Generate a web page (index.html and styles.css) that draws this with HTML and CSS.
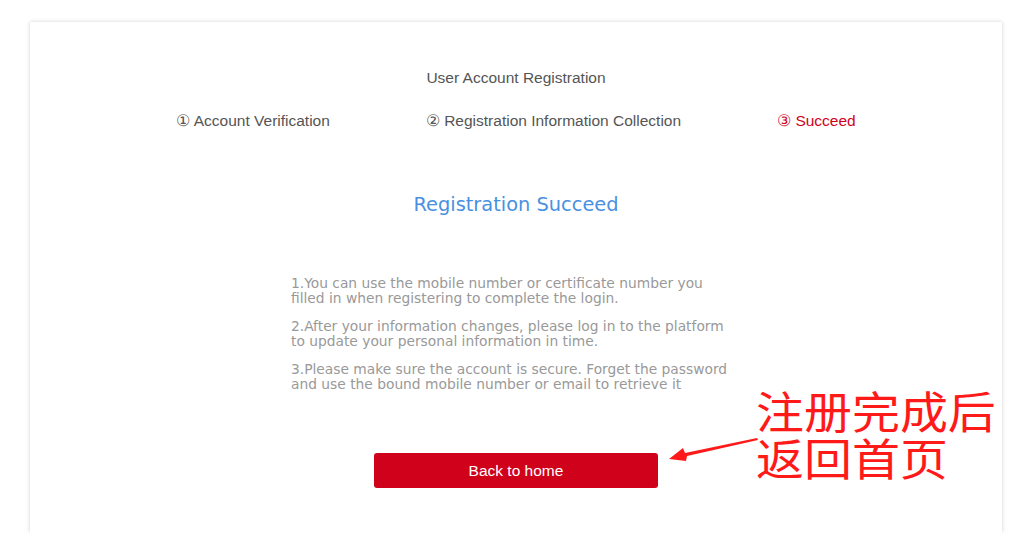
FILE: index.html
```html
<!DOCTYPE html>
<html lang="en">
<head>
    <meta charset="UTF-8">
    <meta name="viewport" content="width=device-width, initial-scale=1.0">
    <title>User Account Registration</title>
    <link rel="stylesheet" href="styles.css">
</head>
<body>

<div class="card">
    <div class="reg-title">User Account Registration</div>

    <div class="steps">
        <div class="step">① Account Verification</div>
        <div class="step">② Registration Information Collection</div>
        <div class="step active">③ Succeed</div>
    </div>

    <h2 class="result">Registration Succeed</h2>

    <div class="tips">
        <p>1.You can use the mobile number or certificate number you filled in when registering to complete the login.</p>
        <p>2.After your information changes, please log in to the platform to update your personal information in time.</p>
        <p>3.Please make sure the account is secure. Forget the password and use the bound mobile number or email to retrieve it</p>
    </div>

    <div class="btn-row">
        <button class="btn-home">Back to home</button>
    </div>

    <!-- annotation -->
    <svg class="note-arrow" width="100" height="30" viewBox="0 0 100 30">
        <polygon points="90,2 91,4 20,20 19,25 2,23 16,12 18,17" fill="#ff1a1a"/>
    </svg>
    <div class="note">注册完成后<br>返回首页</div>
</div>

</body>
</html>
```

FILE: styles.css
```css
body{
    margin: 0;
    background: #fff;
    font-family: "Liberation Sans", Arial, sans-serif;
}
.card{
    position: relative;
    box-sizing: border-box;
    margin: 22px 29px 0 30px;
    height: 511px;
    background: #fff;
    box-shadow: 0 0 4px rgba(0,0,0,0.18);
    padding-top: 47px;
}
.reg-title{
    text-align: center;
    font-size: 15.5px;
    color: #555;
    line-height: 18px;
}
.steps{
    display: flex;
    justify-content: center;
    gap: 96px;
    margin-top: 25px;
    font-size: 15.5px;
    line-height: 18px;
    color: #555;
}
.step.active{
    color: #d0021b;
}
.result{
    margin: 63px 0 0;
    text-align: center;
    font-family: "DejaVu Sans", Verdana, sans-serif;
    font-weight: normal;
    font-size: 19.4px;
    line-height: 24px;
    color: #4a90e2;
}
.tips{
    box-sizing: border-box;
    width: 450px;
    padding-right: 6px;
    margin: 59px auto 0;
    font-family: "DejaVu Sans", Verdana, sans-serif;
    font-size: 13.8px;
    line-height: 15px;
    color: #999;
}
.tips p{
    margin: 0 0 13px;
}
.btn-row{
    display: flex;
    justify-content: center;
    margin-top: 61px;
}
.btn-home{
    width: 284px;
    height: 35px;
    border: none;
    border-radius: 3px;
    background: #d0021b;
    color: #fff;
    font-family: "Liberation Sans", Arial, sans-serif;
    font-size: 15.5px;
    cursor: pointer;
}
.note{
    position: absolute;
    left: 726px;
    top: 365px;
    font-family: "Noto Sans CJK SC", sans-serif;
    font-size: 44px;
    line-height: 47px;
    color: #ff1a1a;
    white-space: nowrap;
    transform: scaleX(1.09);
    transform-origin: left top;
}
.note-arrow{
    position: absolute;
    left: 637px;
    top: 414px;
}
```
